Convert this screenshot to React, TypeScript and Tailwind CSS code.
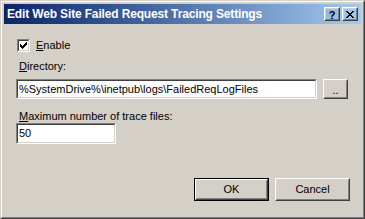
import React from 'react';

const checkPixels = [
  '......#',
  '.....##',
  '#...###',
  '##.###.',
  '#####..',
  '.###...',
  '..#....',
];

const CheckMark: React.FC = () => (
  <svg width="7" height="7" viewBox="0 0 7 7" shapeRendering="crispEdges">
    {checkPixels.map((row, y) =>
      row.split('').map((c, x) =>
        c === '#' ? <rect key={`${x}-${y}`} x={x} y={y} width="1" height="1" fill="#000" /> : null
      )
    )}
  </svg>
);

// classic raised 3d button
const RaisedButton: React.FC<{ className?: string; isDefault?: boolean; children: React.ReactNode }> = ({
  className = '',
  isDefault,
  children,
}) => {
  const inner = (
    <div className="flex-1 flex border-t border-l border-t-white border-l-white border-r border-b border-r-[#404040] border-b-[#404040]">
      <div className="flex-1 flex items-center justify-center border-t border-l border-t-[#d4d0c8] border-l-[#d4d0c8] border-r border-b border-r-[#808080] border-b-[#808080]">
        {children}
      </div>
    </div>
  );
  if (isDefault) {
    return <div className={`flex border border-black ${className}`}>{inner}</div>;
  }
  return <div className={`flex ${className}`}>{inner}</div>;
};

const Sunken: React.FC<{ className?: string; children?: React.ReactNode }> = ({ className = '', children }) => (
  <div className={`flex border-t border-l border-t-[#808080] border-l-[#808080] border-r border-b border-r-white border-b-white ${className}`}>
    <div className="flex-1 flex items-center bg-white border-t border-l border-t-[#404040] border-l-[#404040] border-r border-b border-r-[#d4d0c8] border-b-[#d4d0c8] overflow-hidden">
      {children}
    </div>
  </div>
);

const App: React.FC = () => {
  return (
    <div className="w-[365px] h-[219px] flex bg-[#d4d0c8] border-t border-l border-t-[#d4d0c8] border-l-[#d4d0c8] border-r border-b border-r-[#404040] border-b-[#404040] font-['Liberation_Sans',Arial,sans-serif] text-[11px] leading-[13px] text-black select-none">
      <div className="flex-1 flex flex-col p-[2px] border-t border-l border-t-white border-l-white border-r border-b border-r-[#808080] border-b-[#808080]">
        {/* title bar */}
        <div className="h-[20px] flex items-center justify-between pl-[3px] pr-[3px] bg-gradient-to-r from-[#0a246a] to-[#a6caf0]">
          <span className="text-white font-bold text-[12px] tracking-[-0.15px] leading-[14px]">
            Edit Web Site Failed Request Tracing Settings
          </span>
          <div className="flex gap-[2px]">
            <RaisedButton className="w-[16px] h-[14px]">
              <span className="font-bold text-[11px] leading-[10px] mt-[1px]">?</span>
            </RaisedButton>
            <RaisedButton className="w-[16px] h-[14px]">
              <svg width="8" height="7" viewBox="0 0 8 7" shapeRendering="crispEdges">
                <path d="M0 0h2v1h1v1h2V1h1V0h2v1H7v1H6v1H5v1h1v1h1v1h1v1H6V6H5V5H3v1H2v1H0V6h1V5h1V4h1V3H2V2H1V1H0z" fill="#000" />
              </svg>
            </RaisedButton>
          </div>
        </div>

        {/* body */}
        <div className="flex-1 flex flex-col px-[12px] pr-[11px]">
          <div className="mt-[15px] flex items-center gap-[6px] ml-[1px]">
            <Sunken className="w-[13px] h-[13px]">
              <div className="flex-1 flex items-center justify-center">
                <CheckMark />
              </div>
            </Sunken>
            <span>
              <u className="underline-offset-[1px]">E</u>nable
            </span>
          </div>

          <div className="mt-[8px] ml-[3px]">
            <u className="underline-offset-[1px]">D</u>irectory:
          </div>
          <div className="mt-[6px] flex gap-[6px]">
            <Sunken className="w-[301px] h-[20px]">
              <span className="pl-[1px]">%SystemDrive%\inetpub\logs\FailedReqLogFiles</span>
            </Sunken>
            <RaisedButton className="w-[25px] h-[20px]">
              <span className="mt-[2px]">..</span>
            </RaisedButton>
          </div>

          <div className="mt-[11px] ml-[3px]">
            <u className="underline-offset-[1px]">M</u>aximum number of trace files:
          </div>
          <Sunken className="w-[100px] h-[21px]">
            <span className="pl-[1px]">50</span>
          </Sunken>

          <div className="mt-[34px] flex justify-end gap-[6px]">
            <RaisedButton isDefault className="w-[75px] h-[23px]">
              <span>OK</span>
            </RaisedButton>
            <RaisedButton className="w-[75px] h-[23px]">
              <span>Cancel</span>
            </RaisedButton>
          </div>
        </div>
      </div>
    </div>
  );
};

export default App;
